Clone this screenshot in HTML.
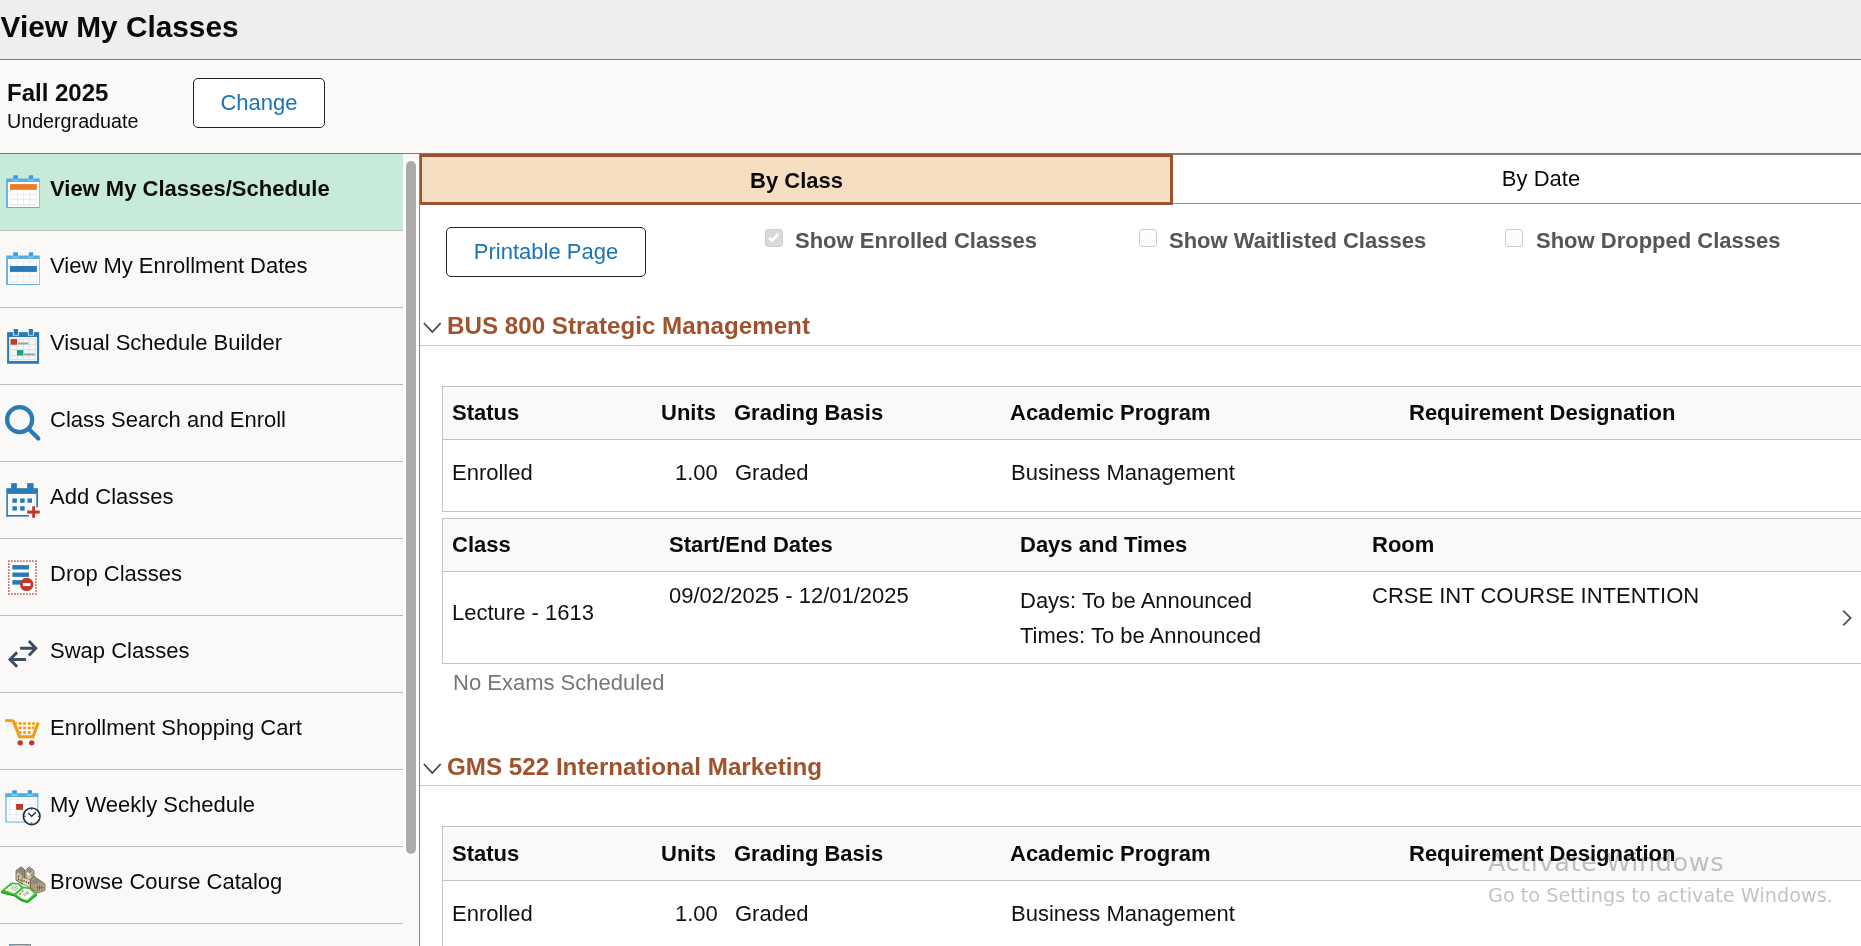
<!DOCTYPE html>
<html lang="en">
<head>
<meta charset="utf-8">
<title>View My Classes</title>
<style>
*{box-sizing:border-box;margin:0;padding:0}
html,body{width:1861px;height:946px;overflow:hidden;background:#fff;font-family:"Liberation Sans",sans-serif;color:#0b0b0b}
#root{position:relative;width:1861px;height:946px;overflow:hidden;will-change:transform}
.abs{position:absolute;white-space:nowrap}
#hdr{left:0;top:0;width:1861px;height:60px;background:#f0eeec;border-bottom:1px solid #7a7a7a}
#hdr h1{position:absolute;left:0.6px;top:9.7px;font-size:29.8px;font-weight:bold;line-height:34px;color:#0b0b0b}
#sub{left:0;top:60px;width:1861px;height:94px;background:#faf9f7;border-bottom:1px solid #7a7a7a}
#term{left:7px;top:78.5px;font-size:24px;font-weight:bold;line-height:27px}
#career{left:7px;top:109.5px;font-size:19.7px;line-height:22px}
.btn{border:1px solid #222;border-radius:5px;background:#fff;color:#1a73b8;text-align:center}
#change{left:193px;top:78px;width:132px;height:50px;font-size:22px;line-height:48px}
#nav{left:0;top:154px;width:420px;height:792px;background:#faf9f7;border-right:1px solid #8a847e}
.ni{position:absolute;left:0;width:403px;height:77px;border-bottom:1px solid #bdbdbd}
.ni span{position:absolute;left:50px;top:21.5px;font-size:22px;line-height:26px;white-space:nowrap}
.ni.sel{background:#c8ead8}
.ni.sel span{font-weight:bold}
.ni svg{position:absolute;left:0;top:18px}
#sb{left:406px;top:161px;width:10px;height:693px;background:#acaba9;border-radius:5px;box-shadow:0 0 0 3px #fff}
#main{left:420px;top:154px;width:1441px;height:792px;background:#fff}

#tab1{left:420px;top:154px;width:753px;height:51px;background:#f5dfc0;border:3px solid #9c5230;border-left-width:2px;padding-left:1px;font-size:22px;font-weight:bold;text-align:center;line-height:47px}
#tab2{left:1173px;top:154px;width:736px;height:50px;border-bottom:1px solid #918d89;border-top:1px solid #8a8580;font-size:22px;text-align:center;line-height:48px;padding-right:0}
#print{left:446px;top:227px;width:200px;height:50px;font-size:22px;line-height:48px}
.cb{width:18px;height:18px;border:1px solid #cdcdcd;border-radius:3px;background:#fcfcfc}
.cb.on{background:#d9d9d9;border-color:#d0d0d0}
.cbl{font-size:22px;font-weight:bold;color:#555;line-height:26px}
.sec{font-size:24.2px;font-weight:bold;color:#a0522d;line-height:26px}
.hr{height:1px;background:#c9c9c9;left:420px;width:1441px}
.tbl{left:442px;width:1430px;border:1px solid #c4c0bd;background:#fff}
.th{left:442px;width:1430px;background:#faf9f7;border:1px solid #c4c0bd}
.h{font-size:22px;font-weight:bold;line-height:26px;color:#0a0a0a;z-index:3}
.c{font-size:22px;line-height:26px;color:#111}
.g{font-size:22px;line-height:26px;color:#777}
.wm{z-index:2;font-family:"DejaVu Sans","Liberation Sans",sans-serif;color:rgba(120,120,120,.45)}
</style>
</head>
<body>
<div id="root">
<div id="hdr" class="abs"><h1>View My Classes</h1></div>
<div id="sub" class="abs"></div>
<div id="term" class="abs">Fall 2025</div>
<div id="career" class="abs">Undergraduate</div>
<div id="change" class="abs btn">Change</div>
<div id="nav" class="abs">
<div class="ni sel" style="top:0px"><svg width="46" height="46" viewBox="0 0 46 46"><rect x="13.2" y="3.3" width="4.8" height="5.2" fill="#3a9de0"/><rect x="28.8" y="3.3" width="4.3" height="5.2" fill="#3a9de0"/><rect x="6.2" y="6.5" width="33.5" height="29.4" fill="#52abe4"/><rect x="12.3" y="7.3" width="6.6" height="1.6" fill="#7cc4ea"/><rect x="28" y="7.3" width="6" height="1.6" fill="#7cc4ea"/><rect x="7.9" y="9.9" width="31.2" height="25.1" fill="#fff"/><path d="M10.3 17.8V33.7" stroke="#e3e6ea" stroke-width="0.8"/><path d="M17.4 17.8V33.7" stroke="#e3e6ea" stroke-width="0.8"/><path d="M23.5 17.8V33.7" stroke="#e3e6ea" stroke-width="0.8"/><path d="M30.1 17.8V33.7" stroke="#e3e6ea" stroke-width="0.8"/><path d="M36.7 17.8V33.7" stroke="#e3e6ea" stroke-width="0.8"/><path d="M10.3 17.8H36.7" stroke="#e3e6ea" stroke-width="0.8"/><path d="M10.3 22.3H36.7" stroke="#e3e6ea" stroke-width="0.8"/><path d="M10.3 27.4H36.7" stroke="#e3e6ea" stroke-width="0.8"/><path d="M10.3 32.4H36.7" stroke="#e3e6ea" stroke-width="0.8"/><path d="M10.3 33.7H36.7" stroke="#eceef1" stroke-width="0.9"/><rect x="10" y="12.1" width="26.9" height="5.7" fill="#e67e22"/></svg><span>View My Classes/Schedule</span></div>
<div class="ni" style="top:77px"><svg width="46" height="46" viewBox="0 0 46 46"><rect x="13.2" y="3.3" width="4.8" height="5.2" fill="#3a9de0"/><rect x="28.8" y="3.3" width="4.3" height="5.2" fill="#3a9de0"/><rect x="6.2" y="6.5" width="33.5" height="29.4" fill="#52abe4"/><rect x="12.3" y="7.3" width="6.6" height="1.6" fill="#7cc4ea"/><rect x="28" y="7.3" width="6" height="1.6" fill="#7cc4ea"/><rect x="7.9" y="9.9" width="31.2" height="25.1" fill="#fff"/><path d="M10.3 12.3V33.7" stroke="#e3e6ea" stroke-width="0.8"/><path d="M17.4 12.3V33.7" stroke="#e3e6ea" stroke-width="0.8"/><path d="M23.5 12.3V33.7" stroke="#e3e6ea" stroke-width="0.8"/><path d="M30.1 12.3V33.7" stroke="#e3e6ea" stroke-width="0.8"/><path d="M36.7 12.3V33.7" stroke="#e3e6ea" stroke-width="0.8"/><path d="M10.3 12.3H36.7" stroke="#e3e6ea" stroke-width="0.8"/><path d="M10.3 17H36.7" stroke="#e3e6ea" stroke-width="0.8"/><path d="M10.3 22.9H36.7" stroke="#e3e6ea" stroke-width="0.8"/><path d="M10.3 27.4H36.7" stroke="#e3e6ea" stroke-width="0.8"/><path d="M10.3 32.4H36.7" stroke="#e3e6ea" stroke-width="0.8"/><path d="M10.3 33.7H36.7" stroke="#eceef1" stroke-width="0.9"/><rect x="10" y="17.05" width="26.9" height="5.85" fill="#2a7ab8"/></svg><span>View My Enrollment Dates</span></div>
<div class="ni" style="top:154px"><svg width="46" height="46" viewBox="0 0 46 46"><rect x="13" y="2.4" width="5.8" height="7.2" fill="#fff" opacity=".0"/><rect x="7.1" y="6.1" width="32" height="31.7" fill="#2a7ab8"/><rect x="12.9" y="3" width="6" height="6.6" fill="#eaf2f8"/><rect x="27.9" y="3" width="6" height="6.6" fill="#eaf2f8"/><rect x="13.8" y="3" width="4.2" height="5.9" fill="#2a7ab8"/><rect x="28.8" y="3" width="4.1" height="5.9" fill="#2a7ab8"/><rect x="9.1" y="11" width="28" height="24" fill="#f6f6f6"/><path d="M10.3 13.1V33.7" stroke="#dcdcdc" stroke-width="0.9"/><path d="M17.2 13.1V33.7" stroke="#dcdcdc" stroke-width="0.9"/><path d="M23.3 13.1V33.7" stroke="#dcdcdc" stroke-width="0.9"/><path d="M29.3 13.1V33.7" stroke="#dcdcdc" stroke-width="0.9"/><path d="M35.9 13.1V33.7" stroke="#dcdcdc" stroke-width="0.9"/><path d="M10.3 13.1H35.9" stroke="#dcdcdc" stroke-width="0.9"/><path d="M10.3 18.6H35.9" stroke="#dcdcdc" stroke-width="0.9"/><path d="M10.3 23.7H35.9" stroke="#dcdcdc" stroke-width="0.9"/><path d="M10.3 29.5H35.9" stroke="#dcdcdc" stroke-width="0.9"/><path d="M10.3 33.7H35.9" stroke="#dcdcdc" stroke-width="0.9"/><rect x="10.6" y="13.1" width="6.4" height="5.6" fill="#c0392b"/><rect x="18" y="16.5" width="10.3" height="1.9" fill="#95a5a6"/><rect x="17" y="24.1" width="6.3" height="5.4" fill="#16a085"/><rect x="24" y="27.4" width="10.9" height="1.9" fill="#95a5a6"/></svg><span>Visual Schedule Builder</span></div>
<div class="ni" style="top:231px"><svg width="46" height="46" viewBox="0 0 46 46"><circle cx="19.66" cy="16.68" r="12.5" fill="none" stroke="#2a7ab8" stroke-width="4.25"/><path d="M28.6 25.7L38.3 35.5" stroke="#2a7ab8" stroke-width="4.3" stroke-linecap="round"/></svg><span>Class Search and Enroll</span></div>
<div class="ni" style="top:308px"><svg width="46" height="46" viewBox="0 0 46 46"><rect x="11.1" y="3.15" width="5.8" height="6" fill="#2a7ab8"/><rect x="27.2" y="3.15" width="6.4" height="6" fill="#2a7ab8"/><rect x="6.3" y="8.2" width="31.7" height="5.7" fill="#2a7ab8"/><rect x="6.3" y="13.9" width="1.6" height="22.7" fill="#2a7ab8"/><rect x="36.3" y="13.9" width="1.7" height="13.5" fill="#2a7ab8"/><rect x="6.3" y="35" width="22.7" height="1.6" fill="#2a7ab8"/><rect x="12.4" y="18.4" width="4.5" height="4.4" fill="#2a7ab8"/><rect x="20.2" y="18.4" width="4.5" height="4.4" fill="#2a7ab8"/><rect x="27.5" y="18.4" width="4.5" height="4.4" fill="#2a7ab8"/><rect x="12.4" y="26.2" width="4.5" height="4.4" fill="#2a7ab8"/><rect x="20.2" y="26.2" width="4.5" height="4.4" fill="#2a7ab8"/><rect x="32.2" y="26.2" width="2.8" height="11.6" fill="#c0392b"/><rect x="27.2" y="30.5" width="12.5" height="3.1" fill="#c0392b"/></svg><span>Add Classes</span></div>
<div class="ni" style="top:385px"><svg width="46" height="46" viewBox="0 0 46 46"><rect x="7.9" y="3.2" width="28.9" height="34.7" fill="#fff"/><g fill="#c0392b"><rect x="8.08" y="3.35" width="1.5" height="1.5"/><rect x="8.08" y="36.25" width="1.5" height="1.5"/><rect x="11.09" y="3.35" width="1.5" height="1.5"/><rect x="11.09" y="36.25" width="1.5" height="1.5"/><rect x="14.10" y="3.35" width="1.5" height="1.5"/><rect x="14.10" y="36.25" width="1.5" height="1.5"/><rect x="17.12" y="3.35" width="1.5" height="1.5"/><rect x="17.12" y="36.25" width="1.5" height="1.5"/><rect x="20.13" y="3.35" width="1.5" height="1.5"/><rect x="20.13" y="36.25" width="1.5" height="1.5"/><rect x="23.14" y="3.35" width="1.5" height="1.5"/><rect x="23.14" y="36.25" width="1.5" height="1.5"/><rect x="26.15" y="3.35" width="1.5" height="1.5"/><rect x="26.15" y="36.25" width="1.5" height="1.5"/><rect x="29.17" y="3.35" width="1.5" height="1.5"/><rect x="29.17" y="36.25" width="1.5" height="1.5"/><rect x="32.18" y="3.35" width="1.5" height="1.5"/><rect x="32.18" y="36.25" width="1.5" height="1.5"/><rect x="35.19" y="3.35" width="1.5" height="1.5"/><rect x="35.19" y="36.25" width="1.5" height="1.5"/><rect x="8.08" y="6.34" width="1.5" height="1.5"/><rect x="35.19" y="6.34" width="1.5" height="1.5"/><rect x="8.08" y="9.33" width="1.5" height="1.5"/><rect x="35.19" y="9.33" width="1.5" height="1.5"/><rect x="8.08" y="12.32" width="1.5" height="1.5"/><rect x="35.19" y="12.32" width="1.5" height="1.5"/><rect x="8.08" y="15.31" width="1.5" height="1.5"/><rect x="35.19" y="15.31" width="1.5" height="1.5"/><rect x="8.08" y="18.30" width="1.5" height="1.5"/><rect x="35.19" y="18.30" width="1.5" height="1.5"/><rect x="8.08" y="21.30" width="1.5" height="1.5"/><rect x="35.19" y="21.30" width="1.5" height="1.5"/><rect x="8.08" y="24.29" width="1.5" height="1.5"/><rect x="35.19" y="24.29" width="1.5" height="1.5"/><rect x="8.08" y="27.28" width="1.5" height="1.5"/><rect x="35.19" y="27.28" width="1.5" height="1.5"/><rect x="8.08" y="30.27" width="1.5" height="1.5"/><rect x="35.19" y="30.27" width="1.5" height="1.5"/><rect x="8.08" y="33.26" width="1.5" height="1.5"/><rect x="35.19" y="33.26" width="1.5" height="1.5"/></g><rect x="12.3" y="8.1" width="16.7" height="4.4" fill="#2a7ab8"/><rect x="12.3" y="15.5" width="16.7" height="4.4" fill="#2a7ab8"/><rect x="12.3" y="23.1" width="16.7" height="4.5" fill="#2a7ab8"/><circle cx="26.7" cy="27.4" r="6.7" fill="#c0392b"/><rect x="23" y="26" width="7.5" height="3" fill="#fff"/></svg><span>Drop Classes</span></div>
<div class="ni" style="top:462px"><svg width="46" height="46" viewBox="0 0 46 46"><path d="M20.1 14.25H35M28.9 7L35.75 14.25L28.9 21.5" fill="none" stroke="#3f4b5e" stroke-width="2.9" stroke-linejoin="miter"/><path d="M25.9 25.5H10.5M17.1 18.4L9.98 25.5L17.1 32.8" fill="none" stroke="#3f4b5e" stroke-width="2.9" stroke-linejoin="miter"/></svg><span>Swap Classes</span></div>
<div class="ni" style="top:539px"><svg width="46" height="46" viewBox="0 0 46 46"><rect x="5" y="8.2" width="8.2" height="2.7" fill="#f39c12"/><path d="M13 9.3L19.6 25.8H33L38.3 11.5" fill="none" stroke="#f39c12" stroke-width="3"/><rect x="14.5" y="11.2" width="2.4" height="2.6" fill="#f39c12"/><rect x="18.5" y="11.2" width="3.2" height="2.6" fill="#f39c12"/><rect x="23.1" y="11.2" width="2.8" height="2.6" fill="#f39c12"/><rect x="27.7" y="11.2" width="3" height="2.6" fill="#f39c12"/><rect x="32.1" y="11.2" width="2.8" height="2.6" fill="#f39c12"/><rect x="18.5" y="15.6" width="3.2" height="2.6" fill="#f39c12"/><rect x="23.1" y="15.6" width="2.8" height="2.6" fill="#f39c12"/><rect x="27.7" y="15.6" width="3" height="2.6" fill="#f39c12"/><rect x="32.2" y="15.6" width="2.2" height="2.6" fill="#f39c12"/><rect x="19.3" y="20.2" width="2.4" height="2.6" fill="#f39c12"/><rect x="23.1" y="20.2" width="2.8" height="2.6" fill="#f39c12"/><rect x="27.7" y="20.2" width="3" height="2.6" fill="#f39c12"/><circle cx="20.2" cy="31.85" r="2.7" fill="#c0392b"/><circle cx="31.7" cy="31.85" r="2.7" fill="#c0392b"/></svg><span>Enrollment Shopping Cart</span></div>
<div class="ni" style="top:616px"><svg width="46" height="46" viewBox="0 0 46 46"><rect x="12.2" y="2.25" width="4.6" height="4.5" fill="#3a9de0"/><rect x="27.7" y="2.25" width="4.3" height="4.5" fill="#3a9de0"/><rect x="5.3" y="5.4" width="33" height="29.1" fill="#69b7e8"/><rect x="5.3" y="5.4" width="33" height="3.5" fill="#52abe4"/><rect x="11.3" y="6.3" width="6.4" height="1.6" fill="#8ccbee"/><rect x="26.8" y="6.3" width="6" height="1.6" fill="#8ccbee"/><rect x="6.6" y="9.1" width="30.6" height="24.3" fill="#fff"/><path d="M9.4 11.4V31" stroke="#e3e6ea" stroke-width="0.8"/><path d="M16.3 11.4V31" stroke="#e3e6ea" stroke-width="0.8"/><path d="M22.8 11.4V31" stroke="#e3e6ea" stroke-width="0.8"/><path d="M28.8 11.4V31" stroke="#e3e6ea" stroke-width="0.8"/><path d="M35.5 11.4V31" stroke="#e3e6ea" stroke-width="0.8"/><path d="M9.4 11.4H35.5" stroke="#e3e6ea" stroke-width="0.8"/><path d="M9.4 16.2H35.5" stroke="#e3e6ea" stroke-width="0.8"/><path d="M9.4 21.8H35.5" stroke="#e3e6ea" stroke-width="0.8"/><path d="M9.4 26.5H35.5" stroke="#e3e6ea" stroke-width="0.8"/><path d="M9.4 31H35.5" stroke="#e3e6ea" stroke-width="0.8"/><rect x="16.1" y="16" width="6.9" height="5.8" fill="#c0392b"/><circle cx="31.7" cy="28.3" r="8.3" fill="#fff" stroke="#1f2d40" stroke-width="1.6"/><path d="M28.3 25L31.7 28.3L35.9 24.2" fill="none" stroke="#1f2d40" stroke-width="1.3"/><path d="M31.7 20.8v1.4M31.7 34.4v1.4M24.2 28.3h1.4M37.8 28.3h1.4" stroke="#1f2d40" stroke-width="1"/></svg><span>My Weekly Schedule</span></div>
<div class="ni" style="top:693px"><svg width="46" height="46" viewBox="0 0 46 46"><path d="M16.1 5.6L21.2 2L24.4 4.6V17.2L22.2 19L16.1 15.2Z" fill="#b3a282" stroke="#5e4f36" stroke-width=".9" stroke-linejoin="round"/><path d="M17.2 5.6L21.2 2.8L23.9 5.2L24.2 10.8L22.6 11.2L19.2 7.6Z" fill="#86878c"/><path d="M16.6 8L19 8.6L22.4 12V18.3L16.6 14.8Z" fill="#cdbf9f"/><path d="M18.6 10.6v1.8M18.6 13.6v1.6M21 14.4v1.8" stroke="#4a3d2a" stroke-width="1"/><path d="M25.9 5.2L29.2 2L33.8 5.6V16.5L25.9 15Z" fill="#d8caaa" stroke="#5e4f36" stroke-width=".9" stroke-linejoin="round"/><path d="M26.8 5.2L29.2 2.8L32.8 5.8L30.4 8.2L27.4 7Z" fill="#8b8c91"/><path d="M26.6 8.2l2.6 1.2" stroke="#fff" stroke-width="1.2"/><path d="M30.4 8.6L33.4 6.4V15.8L30.4 15.2Z" fill="#b9a988"/><path d="M31.4 10.2l1.4-.4" stroke="#4a5a78" stroke-width=".9"/><path d="M22.2 12.4L30.4 14.6V23L22.2 19Z" fill="#e2d6ba" stroke="#6b5a3e" stroke-width=".6"/><path d="M24 15v2M26.4 16v2M28.6 17v2" stroke="#5a4a32" stroke-width="1"/><path d="M30.4 14.8L33.8 11.2L44.9 18.9V25.4L37.2 28L30.4 23.4Z" fill="#a99979" stroke="#5e4f36" stroke-width=".8" stroke-linejoin="round"/><path d="M31.6 16.4L35.2 12.8L39.4 16.2L38.4 18.6L34.6 19Z" fill="#88898e"/><path d="M35.4 19.4L44.4 19.2V25.2L37.4 27.4L35.4 26Z" fill="#bcab8a"/><path d="M37.4 20.4v5.6M39.6 20.2v5.2M41.8 20v4.6" stroke="#6e5e44" stroke-width="1"/><path d="M36 22.6h8" stroke="#7a6a4e" stroke-width=".7"/><path d="M1 26L11.1 17.6L18.8 18.1L23.3 21.8L29.6 22.6L37 28.9V30.5L27.5 38L21 36L14.8 31.5L1 28Z" fill="#35bd35"/><path d="M1 27.1L14.8 30.6L21 35L27.5 37L37 29.5V30.5L27.5 38L21 36L14.8 31.5L1 28Z" fill="#17901a"/><path d="M4.8 25.2L11.8 19.2L18 19.6L21.2 22.4L14.4 28.6Z" fill="#fbfbee"/><path d="M16.4 29.4L23.6 23.2L29 24L34.4 28.6L27 35.2L22 33.4Z" fill="#fbfbee"/><path d="M4.8 25.2L8 22.4L11 24L7.6 26Z" fill="#eef0b8" opacity=".8"/><path d="M16.4 29.4L21 25.4L24.4 26.4L20 30.6Z" fill="#eef0b8" opacity=".8"/><path d="M11.4 23.6l4-3.4M12.6 25l4.2-3.6M13.8 26.4l4-3.4" stroke="#55585c" stroke-width=".9" stroke-dasharray="1 .5"/><path d="M23.4 29.6l5-3.4M24.4 30.8l5-3.4" stroke="#55585c" stroke-width=".9" stroke-dasharray="1 .5"/><path d="M21.8 26.4l1.6-.8M19.4 29.2l1.6-.8M11 20.4l.8.6" stroke="#4a6a8a" stroke-width="1.1"/></svg><span>Browse Course Catalog</span></div>
<div class="ni" style="top:770px"><svg width="46" height="46" viewBox="0 0 46 46"><rect x="9" y="2" width="22" height="3" fill="#c3c9cc"/><rect x="9" y="2" width="22" height="1.1" fill="#7f8c8d"/><rect x="30" y="2" width="1" height="3" fill="#7f8c8d"/><path d="M9 2h1.6L9 3.8z" fill="#3a9de0"/><rect x="9" y="3" width="1.6" height="2" fill="#4aa8e4"/></svg><span></span></div>
</div>
<div id="sb" class="abs"></div>
<div id="main" class="abs"></div>
<div id="tab1" class="abs">By Class</div>
<div id="tab2" class="abs">By Date</div>
<div id="print" class="abs btn">Printable Page</div>
<div class="abs cb on" style="left:765px;top:229px"><svg width="15" height="15" viewBox="0 0 15 15"><path d="M3 7.8l3.2 3 6-7" fill="none" stroke="#fff" stroke-width="2.6"/></svg></div>
<div class="abs cbl" style="left:795px;top:228px;">Show Enrolled Classes</div>
<div class="abs cb" style="left:1139px;top:229px"></div>
<div class="abs cbl" style="left:1169px;top:228px;">Show Waitlisted Classes</div>
<div class="abs cb" style="left:1505px;top:229px"></div>
<div class="abs cbl" style="left:1536px;top:228px;">Show Dropped Classes</div>
<svg class="abs" style="left:423px;top:321px" width="19" height="14" viewBox="0 0 19 14"><path d="M0.9 2l8.4 9 8.4-9" fill="none" stroke="#444" stroke-width="1.8"/></svg>
<div class="abs sec" style="left:447px;top:313px;">BUS 800 Strategic Management</div>
<div class="abs hr" style="top:345px"></div>
<div class="abs tbl" style="top:386px;height:126px"></div>
<div class="abs th" style="top:386px;height:54px"></div>
<div class="abs h" style="left:452px;top:400px;">Status</div>
<div class="abs h" style="left:661px;top:400px;">Units</div>
<div class="abs h" style="left:734px;top:400px;">Grading Basis</div>
<div class="abs h" style="left:1010px;top:400px;">Academic Program</div>
<div class="abs h" style="left:1409px;top:400px;">Requirement Designation</div>
<div class="abs c" style="left:452px;top:460px;">Enrolled</div>
<div class="abs c" style="left:675px;top:460px;">1.00</div>
<div class="abs c" style="left:735px;top:460px;">Graded</div>
<div class="abs c" style="left:1011px;top:460px;">Business Management</div>
<div class="abs tbl" style="top:518px;height:146px"></div>
<div class="abs th" style="top:518px;height:54px"></div>
<div class="abs h" style="left:452px;top:532px;">Class</div>
<div class="abs h" style="left:669px;top:532px;">Start/End Dates</div>
<div class="abs h" style="left:1020px;top:532px;">Days and Times</div>
<div class="abs h" style="left:1372px;top:532px;">Room</div>
<div class="abs c" style="left:452px;top:600px;">Lecture - 1613</div>
<div class="abs c" style="left:669px;top:583px;">09/02/2025 - 12/01/2025</div>
<div class="abs c" style="left:1020px;top:588px;">Days: To be Announced</div>
<div class="abs c" style="left:1020px;top:623px;">Times: To be Announced</div>
<div class="abs c" style="left:1372px;top:583px;">CRSE INT COURSE INTENTION</div>
<svg class="abs" style="left:1840px;top:608px" width="14" height="20" viewBox="0 0 14 20"><path d="M3.2 2.6l7.4 7.4-7.4 7.4" fill="none" stroke="#555" stroke-width="1.9"/></svg>
<div class="abs g" style="left:453px;top:670px;">No Exams Scheduled</div>
<svg class="abs" style="left:423px;top:762px" width="19" height="14" viewBox="0 0 19 14"><path d="M0.9 2l8.4 9 8.4-9" fill="none" stroke="#444" stroke-width="1.8"/></svg>
<div class="abs sec" style="left:447px;top:754px;">GMS 522 International Marketing</div>
<div class="abs hr" style="top:785px"></div>
<div class="abs tbl" style="top:826px;height:127px"></div>
<div class="abs th" style="top:826px;height:55px"></div>
<div class="abs h" style="left:452px;top:841px;">Status</div>
<div class="abs h" style="left:661px;top:841px;">Units</div>
<div class="abs h" style="left:734px;top:841px;">Grading Basis</div>
<div class="abs h" style="left:1010px;top:841px;">Academic Program</div>
<div class="abs h" style="left:1409px;top:841px;">Requirement Designation</div>
<div class="abs c" style="left:452px;top:901px;">Enrolled</div>
<div class="abs c" style="left:675px;top:901px;">1.00</div>
<div class="abs c" style="left:735px;top:901px;">Graded</div>
<div class="abs c" style="left:1011px;top:901px;">Business Management</div>
<div class="abs wm" style="left:1488px;top:844.5px;font-size:25.6px;line-height:34px;letter-spacing:.55px">Activate Windows</div>
<div class="abs wm" style="left:1488px;top:884px;font-size:19.25px;line-height:24px">Go to Settings to activate Windows.</div>
</div>
</body>
</html>
